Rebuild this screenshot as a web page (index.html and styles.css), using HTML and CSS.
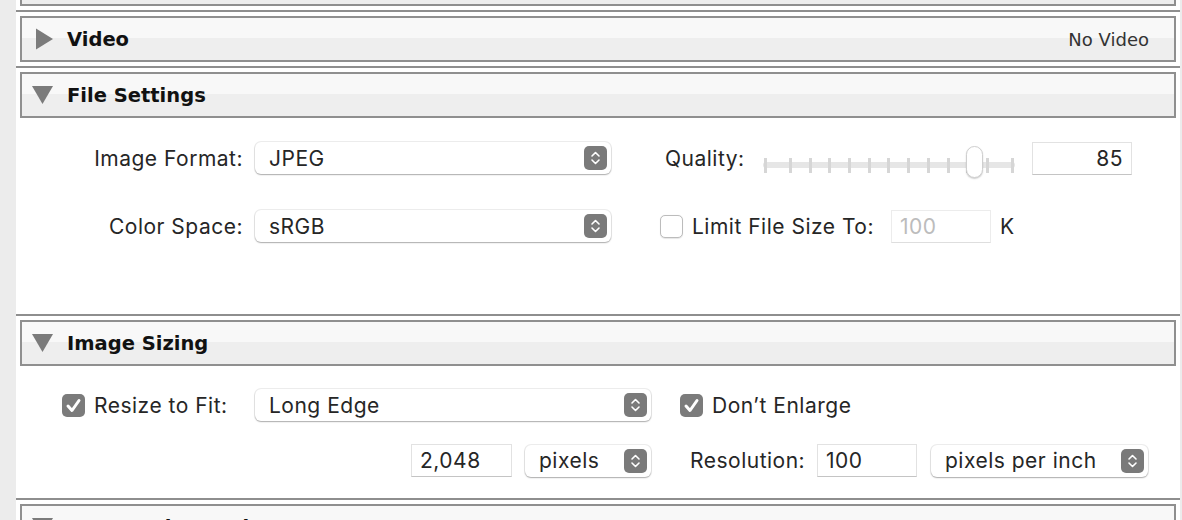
FILE: index.html
```html
<!DOCTYPE html>
<html>
<head>
<meta charset="utf-8">
<link rel="stylesheet" href="styles.css">
</head>
<body>
<div class="panel">
  <section class="section">
    <div class="header"></div>
  </section>

  <section class="section">
    <div class="header">
      <svg class="disclosure" viewBox="0 0 22 22"><polygon points="4,0.5 21,11 4,21.5" fill="#7b7b7b"/></svg>
      <span class="title">Video</span>
      <span class="status">No Video</span>
    </div>
  </section>

  <section class="section">
    <div class="header">
      <svg class="disclosure" viewBox="0 0 22 22"><polygon points="0,2 21,2 10.5,20" fill="#7b7b7b"/></svg>
      <span class="title">File Settings</span>
    </div>
    <div class="body file-body">
      <div class="row">
        <span class="label label-file">Image Format:</span>
        <div class="select sel-format"><span class="sel-text">JPEG</span>
          <svg class="stepper" viewBox="0 0 23 24"><rect width="23" height="24" rx="5" fill="#7a7a7a"/><polyline points="8,10 11.5,6.5 15,10" fill="none" stroke="#fff" stroke-width="1.6" stroke-linecap="round" stroke-linejoin="round"/><polyline points="8,14 11.5,17.5 15,14" fill="none" stroke="#fff" stroke-width="1.6" stroke-linecap="round" stroke-linejoin="round"/></svg>
        </div>
        <span class="label label-quality">Quality:</span>
        <div class="slider">
          <div class="track"></div>
          <div class="ticks">
            <span class="tick"></span>
            <div class="ticks-inner">
              <span class="tick"></span><span class="tick"></span><span class="tick"></span><span class="tick"></span><span class="tick"></span><span class="tick"></span><span class="tick"></span><span class="tick"></span><span class="tick"></span><span class="tick"></span><span class="tick"></span>
            </div>
            <span class="tick"></span>
          </div>
          <div class="thumb"></div>
        </div>
        <div class="field field-quality">85</div>
      </div>
      <div class="row">
        <span class="label label-file">Color Space:</span>
        <div class="select sel-format"><span class="sel-text">sRGB</span>
          <svg class="stepper" viewBox="0 0 23 24"><rect width="23" height="24" rx="5" fill="#7a7a7a"/><polyline points="8,10 11.5,6.5 15,10" fill="none" stroke="#fff" stroke-width="1.6" stroke-linecap="round" stroke-linejoin="round"/><polyline points="8,14 11.5,17.5 15,14" fill="none" stroke="#fff" stroke-width="1.6" stroke-linecap="round" stroke-linejoin="round"/></svg>
        </div>
        <span class="checkbox unchecked cb-limit"></span>
        <span class="label label-limit">Limit File Size To:</span>
        <div class="field field-disabled">100</div>
        <span class="label label-k">K</span>
      </div>
    </div>
  </section>

  <section class="section">
    <div class="header">
      <svg class="disclosure" viewBox="0 0 22 22"><polygon points="0,2 21,2 10.5,20" fill="#7b7b7b"/></svg>
      <span class="title">Image Sizing</span>
    </div>
    <div class="body sizing-body">
      <div class="row row-resize">
        <span class="checkbox checked"><svg viewBox="0 0 23 23"><polyline points="6,12 10,16.5 17,6.5" fill="none" stroke="#fff" stroke-width="3" stroke-linecap="round" stroke-linejoin="round"/></svg></span>
        <span class="label label-resize">Resize to Fit:</span>
        <div class="select sel-edge"><span class="sel-text">Long Edge</span>
          <svg class="stepper" viewBox="0 0 23 24"><rect width="23" height="24" rx="5" fill="#7a7a7a"/><polyline points="8,10 11.5,6.5 15,10" fill="none" stroke="#fff" stroke-width="1.6" stroke-linecap="round" stroke-linejoin="round"/><polyline points="8,14 11.5,17.5 15,14" fill="none" stroke="#fff" stroke-width="1.6" stroke-linecap="round" stroke-linejoin="round"/></svg>
        </div>
        <span class="checkbox checked cb-enlarge"><svg viewBox="0 0 23 23"><polyline points="6,12 10,16.5 17,6.5" fill="none" stroke="#fff" stroke-width="3" stroke-linecap="round" stroke-linejoin="round"/></svg></span>
        <span class="label label-enlarge">Don’t Enlarge</span>
      </div>
      <div class="row row-size">
        <div class="field field-size">2,048</div>
        <div class="select sel-pixels"><span class="sel-text">pixels</span>
          <svg class="stepper" viewBox="0 0 23 24"><rect width="23" height="24" rx="5" fill="#7a7a7a"/><polyline points="8,10 11.5,6.5 15,10" fill="none" stroke="#fff" stroke-width="1.6" stroke-linecap="round" stroke-linejoin="round"/><polyline points="8,14 11.5,17.5 15,14" fill="none" stroke="#fff" stroke-width="1.6" stroke-linecap="round" stroke-linejoin="round"/></svg>
        </div>
        <span class="label label-res">Resolution:</span>
        <div class="field field-res">100</div>
        <div class="select sel-ppi"><span class="sel-text">pixels per inch</span>
          <svg class="stepper" viewBox="0 0 23 24"><rect width="23" height="24" rx="5" fill="#7a7a7a"/><polyline points="8,10 11.5,6.5 15,10" fill="none" stroke="#fff" stroke-width="1.6" stroke-linecap="round" stroke-linejoin="round"/><polyline points="8,14 11.5,17.5 15,14" fill="none" stroke="#fff" stroke-width="1.6" stroke-linecap="round" stroke-linejoin="round"/></svg>
        </div>
      </div>
    </div>
  </section>

  <section class="section">
    <div class="header">
      <svg class="disclosure" viewBox="0 0 22 22"><polygon points="0,2 21,2 10.5,20" fill="#7b7b7b"/></svg>
      <span class="title">Output Sharpening</span>
    </div>
  </section>
</div>
</body>
</html>
```

FILE: styles.css
```css
html, body {
  margin: 0;
  padding: 0;
  height: 520px;
  overflow: hidden;
}
body {
  background: #ececec;
  font-family: Inter, "Noto Sans", sans-serif;
  color: #262626;
}
.panel {
  margin-left: 16px;
  width: 1164px;
  margin-top: -46px;
  min-height: 700px;
  background: #ffffff;
}
.section {
  border-top: 2px solid #8e8e8e;
}
.header {
  margin: 4px;
  height: 42px;
  border: 2px solid #8f8f8f;
  background: linear-gradient(#f8f8f8 0, #f8f8f8 48%, #eeeeee 48%, #eeeeee 100%);
  display: flex;
  align-items: center;
  padding: 0 25px 0 10px;
}
.disclosure {
  width: 22px;
  height: 22px;
  margin-right: 13px;
  flex: none;
}
.title {
  font-family: "DejaVu Sans", sans-serif;
  font-weight: bold;
  font-size: 19.5px;
  color: #111;
}
.status {
  margin-left: auto;
  font-family: "DejaVu Sans", sans-serif;
  font-size: 18px;
  color: #333;
}
.body {
  box-sizing: border-box;
}
.file-body {
  height: 192px;
  padding-top: 20px;
}
.sizing-body {
  height: 128px;
  padding-top: 19px;
}
.row {
  display: flex;
  align-items: center;
  height: 32px;
}
.file-body .row + .row {
  margin-top: 36px;
}
.row-size {
  margin-top: 23px;
  height: 33px;
}
.label {
  font-size: 21px;
  letter-spacing: 0.5px;
  white-space: nowrap;
  flex: none;
}
.label-file {
  width: 227px;
  text-align: right;
  margin-right: 12px;
}
.label-quality {
  width: 78px;
  margin-left: 54px;
  margin-right: 20px;
}
.label-limit {
  width: 181px;
  margin-left: 9px;
  margin-right: 18px;
}
.label-k {
  margin-left: 9px;
}
.label-resize {
  width: 161px;
  margin-left: 9px;
}
.label-enlarge {
  margin-left: 9px;
}
.label-res {
  width: 115px;
  margin-left: 39px;
  margin-right: 12px;
}
.select {
  position: relative;
  flex: none;
  box-sizing: border-box;
  height: 32px;
  background: #fff;
  border-radius: 6px;
  box-shadow: 0 0 0 1px rgba(0, 0, 0, 0.07), 0 1px 1.5px rgba(0, 0, 0, 0.28);
  display: flex;
  align-items: center;
  padding-left: 14px;
  padding-right: 4px;
  font-size: 21px;
  letter-spacing: 0.5px;
}
.sel-text {
  flex: 1;
  white-space: nowrap;
}
.stepper {
  width: 23px;
  height: 24px;
  flex: none;
}
.sel-format { width: 356px; }
.sel-edge { width: 396px; }
.sel-pixels { width: 126px; margin-left: 13px; }
.sel-ppi { width: 217px; margin-left: 14px; }
.slider {
  position: relative;
  width: 252px;
  height: 32px;
  flex: none;
  margin-right: 17px;
}
.track {
  position: absolute;
  left: 0;
  right: 0;
  top: 20px;
  height: 6px;
  background: #e6e6e6;
  border-radius: 3px;
}
.ticks {
  position: absolute;
  left: 1px;
  right: 1px;
  top: 16px;
  height: 15px;
  display: flex;
  justify-content: space-between;
}
.ticks-inner {
  width: 200px;
  display: flex;
  justify-content: space-between;
}
.tick {
  width: 3px;
  height: 15px;
  background: #d6d6d6;
}
.thumb {
  position: absolute;
  left: 203px;
  top: 4px;
  width: 17px;
  height: 32px;
  box-sizing: border-box;
  border-radius: 9px;
  background: #fff;
  border: 1px solid #cfcfcf;
  box-shadow: 0 1px 1.5px rgba(0, 0, 0, 0.2);
}
.field {
  box-sizing: border-box;
  height: 33px;
  background: #fff;
  border: 1px solid #e2e2e2;
  border-bottom: 1px solid #c4c4c4;
  font-size: 21px;
  letter-spacing: 0.5px;
  display: flex;
  align-items: center;
  padding: 0 8px;
  flex: none;
}
.field-quality {
  width: 100px;
  justify-content: flex-end;
}
.field-disabled {
  width: 100px;
  color: #bcbcbc;
  border-color: #ececec;
  border-bottom-color: #dedede;
}
.field-size {
  width: 101px;
  margin-left: 395px;
}
.field-res {
  width: 100px;
}
.checkbox {
  box-sizing: border-box;
  width: 23px;
  height: 23px;
  border-radius: 5px;
  flex: none;
  display: flex;
}
.checkbox svg {
  width: 23px;
  height: 23px;
}
.unchecked {
  background: #fff;
  border: 1px solid #bcbcbc;
  box-shadow: 0 0.5px 1px rgba(0, 0, 0, 0.1);
}
.checked {
  background: #7b7b7b;
}
.cb-limit {
  margin-left: 49px;
}
.row-resize {
  padding-left: 46px;
}
.cb-enlarge {
  margin-left: 29px;
}
```
